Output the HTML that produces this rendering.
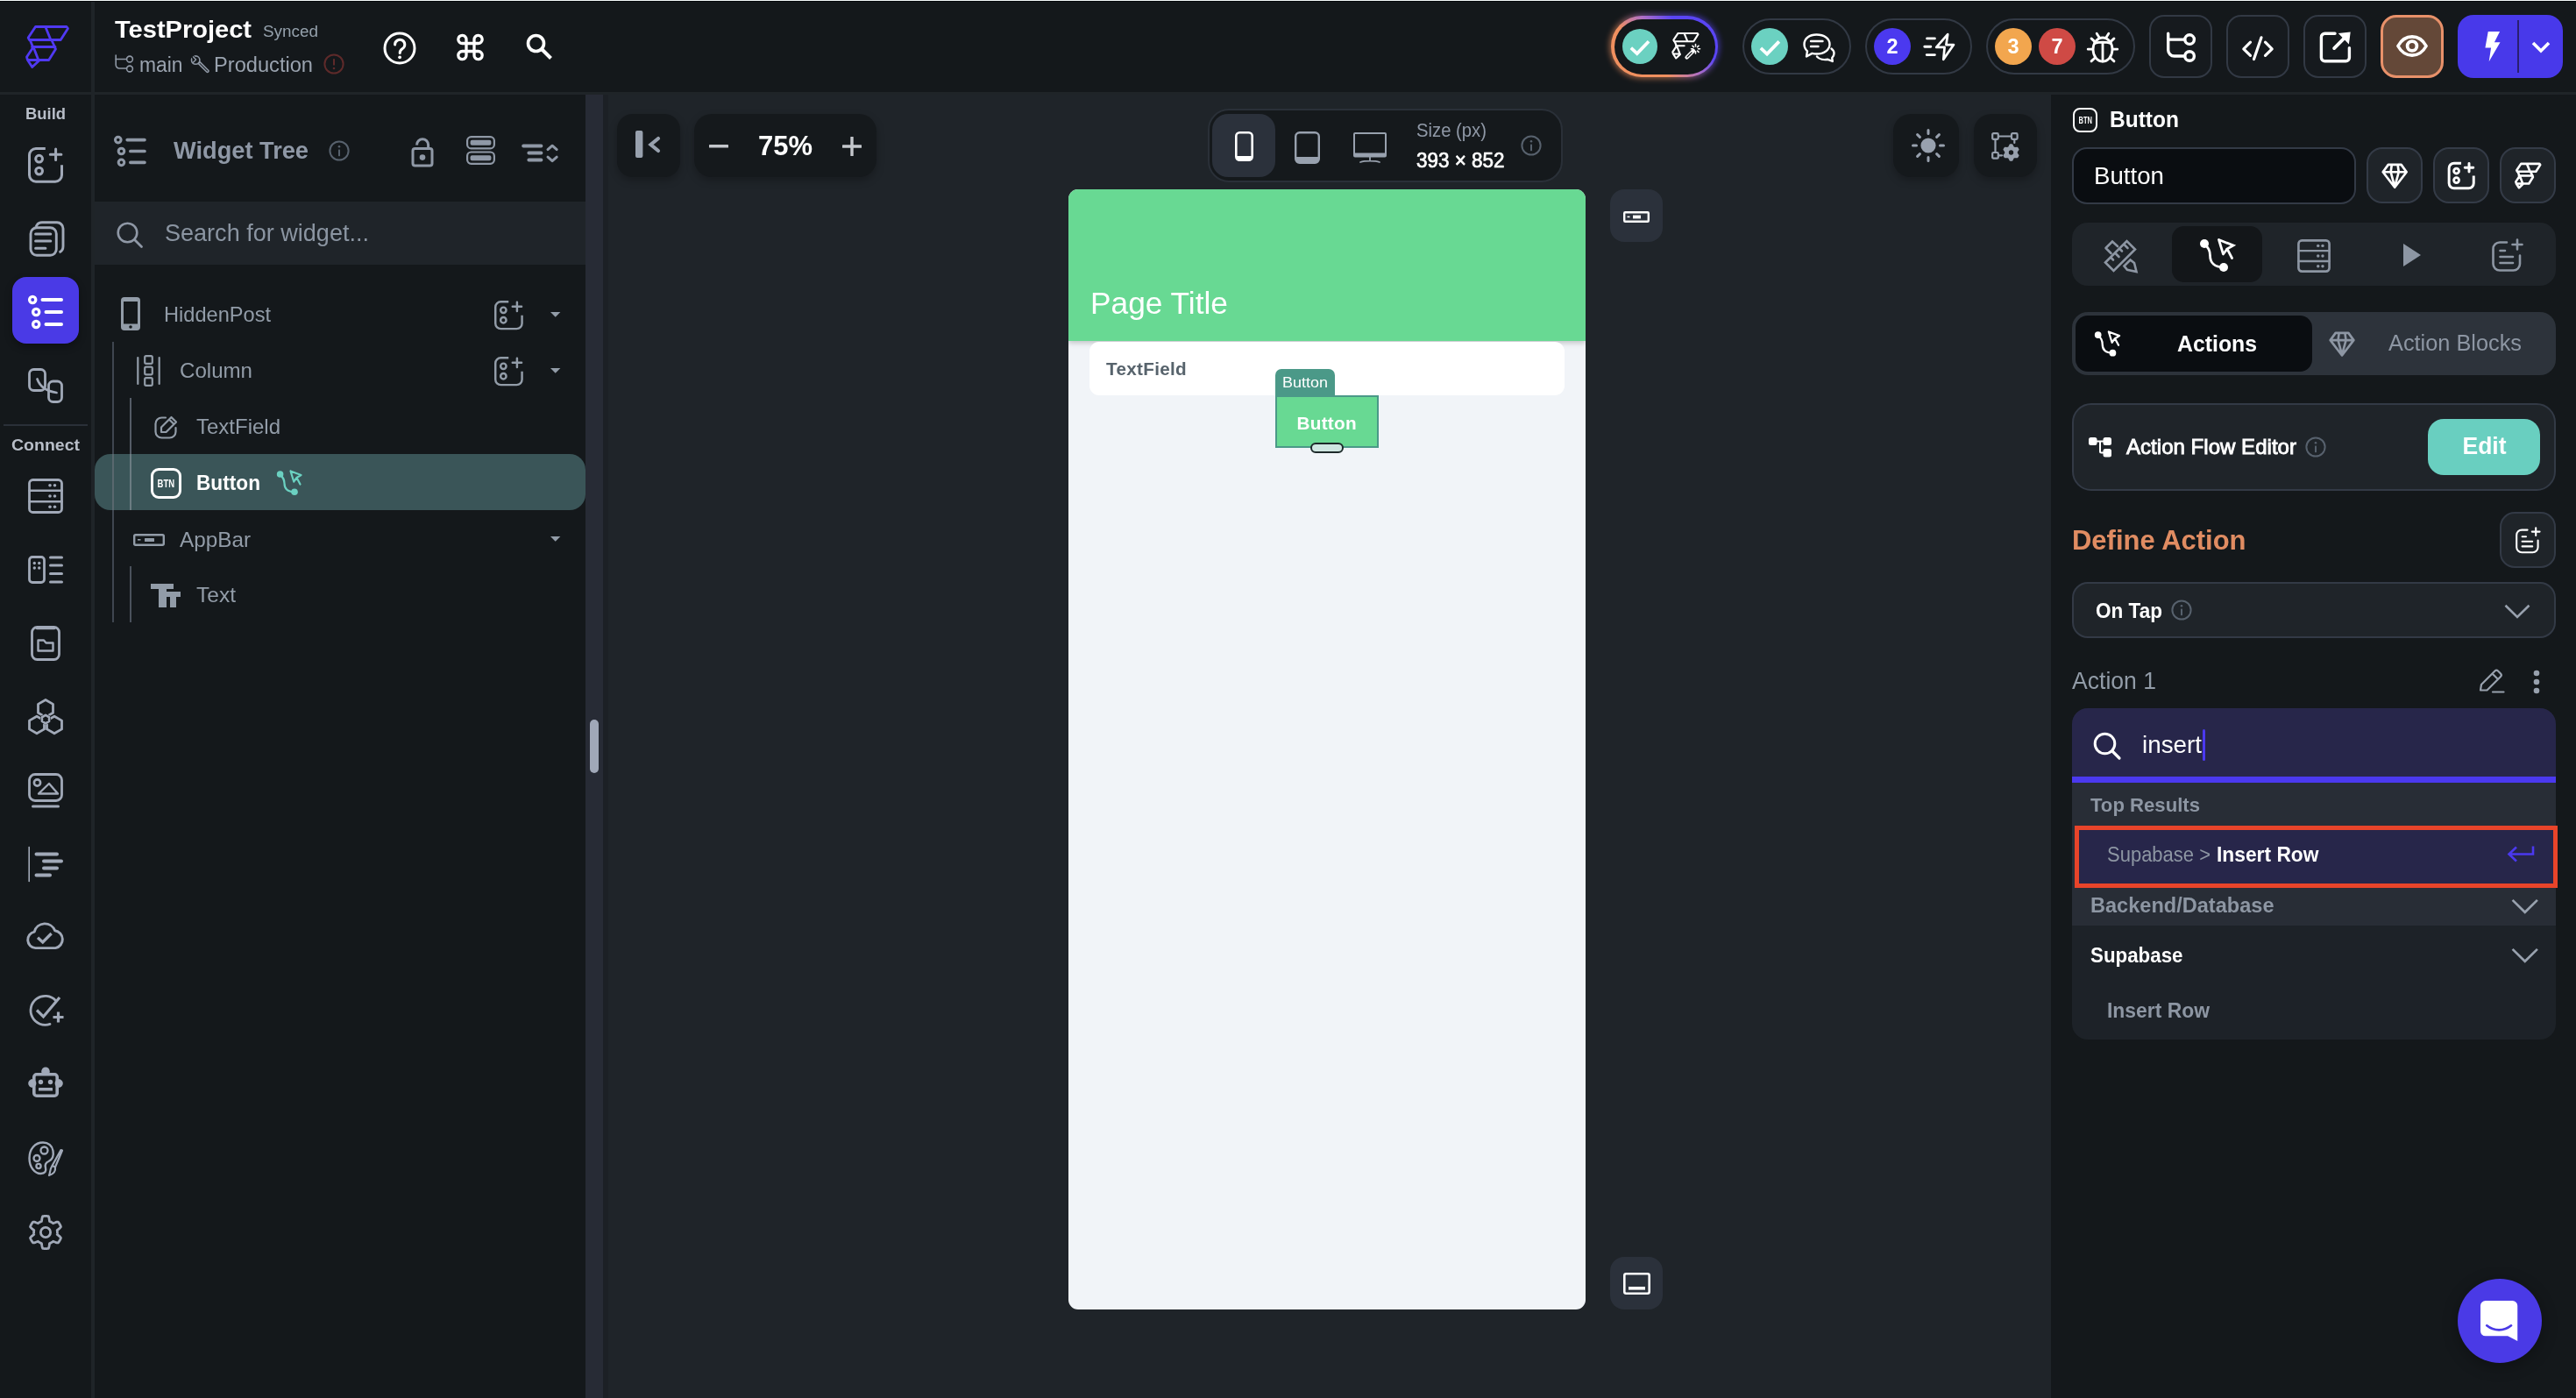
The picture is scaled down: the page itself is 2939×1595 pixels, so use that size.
<!DOCTYPE html><html><head><meta charset="utf-8"><title>FlutterFlow</title><style>html,body{margin:0;padding:0;background:#14181b;}body{width:2939px;height:1595px;position:relative;overflow:hidden;font-family:"Liberation Sans", sans-serif;}.a{position:absolute;display:block;}.t{white-space:nowrap;opacity:.999;}svg{overflow:visible}</style></head><body>
<div class="a" style="left:0px;top:0px;width:2939px;height:1595px;background:#14181b;"></div>
<div class="a" style="left:688px;top:107px;width:1652px;height:1488px;background:#1f2429;"></div>
<div class="a" style="left:0px;top:0px;width:2939px;height:1px;background:#f4f9f9;"></div>
<div class="a" style="left:0px;top:1px;width:2939px;height:1px;background:#06080b;"></div>
<div class="a" style="left:104px;top:2px;width:4px;height:1593px;background:#1f2428;"></div>
<div class="a" style="left:0px;top:105px;width:2939px;height:3px;background:#1f2428;"></div>
<div class="a" style="left:668px;top:108px;width:20px;height:1487px;background:#272b35;"></div>
<div class="a" style="left:688px;top:108px;width:6px;height:1487px;background:#1c2025;"></div>
<div class="a" style="left:673px;top:821px;width:10px;height:61px;background:#a0a8b8;border-radius:5px;"></div>
<svg class="a" style="left:30.00px;top:29.00px" width="49.00" height="49.00" viewBox="0 0 49 49"><path d="M10.5 1.5 H46 L47.5 3.5 L39.2 16.5 H3.5 L2.2 14 Z M22 2 L27.7 16 M4.2 16.5 L7.5 24.5 M29 17 L32.5 24.5 M6.5 24.5 H33 M32.5 25 L33.5 27 L25.7 39.5 H1.5 L0.5 36 L7.5 25.5 M9 27 L13.5 38.5 M1.5 39.5 L6.7 47.5 L14.5 40.2" fill="none" stroke="#5039f2" stroke-width="2.8" stroke-linecap="round" stroke-linejoin="round" /></svg>
<div class="a t" id="proj" style="top:15.6px;height:36px;line-height:36px;font-size:27.5px;font-weight:700;color:#fff;left:131px;transform-origin:0 50%;transform:scaleX(1.0559);">TestProject</div>
<div class="a t" id="synced" style="top:24.5px;height:23px;line-height:23px;font-size:18px;font-weight:400;color:#95a1ac;left:300px;transform-origin:0 50%;transform:scaleX(1.0492);">Synced</div>
<svg class="a" style="left:131.00px;top:62.00px" width="22.00" height="22.00" viewBox="0 0 22 22"><path d="M1.2 1 V12 a4 4 0 0 0 4 4 H13" fill="none" stroke="#8e97a4" stroke-width="1.6" stroke-linecap="round" stroke-linejoin="round" /><path d="M1.2 5.5 H13" fill="none" stroke="#8e97a4" stroke-width="1.6" stroke-linecap="round" stroke-linejoin="round" /><circle cx="17" cy="5.5" r="3.4" fill="none" stroke="#8e97a4" stroke-width="1.6"/><circle cx="17" cy="16.5" r="3.4" fill="none" stroke="#8e97a4" stroke-width="1.6"/></svg>
<div class="a t" id="main" style="top:58.5px;height:31px;line-height:31px;font-size:23.5px;font-weight:400;color:#9aa3af;left:158.5px;transform-origin:0 50%;transform:scaleX(0.9718);">main</div>
<svg class="a" style="left:216.50px;top:62.00px" width="22.00" height="22.00" viewBox="0 0 22 22"><circle cx="6.2" cy="6.6" r="4.7" fill="none" stroke="#8e97a4" stroke-width="1.6"/><path d="M6.2 6.6 L1.5 1" stroke="#14181b" stroke-width="3.6"/><path d="M3.6 2.9 L6.6 6 L3.2 9.6" fill="none" stroke="#8e97a4" stroke-width="1.5" stroke-linecap="round" stroke-linejoin="round" /><path d="M9.2 10.4 L11 8.6 L20.6 18.2 a1.2 1.2 0 0 1 0 1.8 a1.2 1.2 0 0 1 -1.8 0 Z" fill="none" stroke="#8e97a4" stroke-width="1.6" stroke-linecap="round" stroke-linejoin="round" /></svg>
<div class="a t" id="prod" style="top:58.5px;height:31px;line-height:31px;font-size:23.5px;font-weight:400;color:#9aa3af;left:243.5px;transform-origin:0 50%;transform:scaleX(1.0057);">Production</div>
<svg class="a" style="left:369.00px;top:61.00px" width="24.00" height="24.00" viewBox="0 0 24 24"><circle cx="12" cy="12" r="10.6" fill="none" stroke="#5e2a2a" stroke-width="2"/><rect x="11" y="6" width="2" height="7.5" rx="0.5" fill="#5e2a2a"/><circle cx="12" cy="17" r="1.3" fill="#5e2a2a"/></svg>
<svg class="a" style="left:437.00px;top:35.50px" width="38.00" height="38.00" viewBox="0 0 38 38"><circle cx="19" cy="19" r="17" fill="none" stroke="#fff" stroke-width="3"/><path d="M13.6 15 a5.6 5.6 0 1 1 8.6 4.6 c-2.3 1.5 -3 2.6 -3 4.8" fill="none" stroke="#fff" stroke-width="3" stroke-linecap="round" stroke-linejoin="round" /><circle cx="19.1" cy="29.3" r="1.9" fill="#fff"/></svg>
<svg class="a" style="left:520.50px;top:38.50px" width="31.00" height="30.00" viewBox="0 0 31 30"><path d="M11 10.5 V6.2 A4.6 4.6 0 1 0 6.4 10.5 H24.6 A4.6 4.6 0 1 0 20 6.2 V23.8 A4.6 4.6 0 1 0 24.6 19.5 H6.4 A4.6 4.6 0 1 0 11 23.8 Z" fill="none" stroke="#fff" stroke-width="3.3" stroke-linecap="round" stroke-linejoin="round" /></svg>
<svg class="a" style="left:599.50px;top:37.50px" width="31.00" height="31.00" viewBox="0 0 31 31"><circle cx="11.5" cy="11.5" r="9" fill="none" stroke="#fff" stroke-width="3.6"/><path d="M18.5 18.5 L28.5 28.5" fill="none" stroke="#fff" stroke-width="4" stroke-linecap="round" stroke-linejoin="round" style="stroke-linecap:butt"/></svg>
<div class="a" style="left:1836px;top:16px;width:126px;height:74px;border-radius:37px;background:linear-gradient(45deg,#f0905f 0%,#f0905f 34%,#b070c4 54%,#5a45f5 72%,#5a45f5 100%);filter:blur(3px);opacity:.55"></div>
<div class="a" style="left:1838px;top:18px;width:122px;height:70px;border-radius:35px;background:linear-gradient(45deg,#f0905f 0%,#f0905f 34%,#b070c4 54%,#5a45f5 72%,#5a45f5 100%);"></div>
<div class="a" style="left:1841.5px;top:21.5px;width:115px;height:63px;background:#14181b;border-radius:32px;"></div>
<div class="a" style="left:1851px;top:33px;width:40px;height:40px;background:#6bd1c1;border-radius:20px;"></div>
<svg class="a" style="left:1859.04px;top:44.80px" width="23.92" height="18.40" viewBox="0 0 26 20"><path d="M2 10.5 L9.5 17.5 L24 2.5" fill="none" stroke="#fff" stroke-width="4" stroke-linecap="round" stroke-linejoin="round" style="stroke-linecap:butt;stroke-linejoin:miter"/></svg>
<svg class="a" style="left:1907.50px;top:36.50px" width="32.00" height="32.00" viewBox="0 0 32 32"><g transform="scale(0.62)"><path d="M10.5 1.5 H46 L47.5 3.5 L39.2 16.5 H3.5 L2.2 14 Z M22 2 L27.7 16 M4.2 16.5 L7.5 24.5 M6.5 24.5 H22 M7.5 25.5 L0.5 36 L1.5 39.5 H14 M9 27 L13.5 38.5 M1.5 39.5 L6.7 47.5 L14.5 40.2" fill="none" stroke="#fff" stroke-width="3.4" stroke-linecap="round" stroke-linejoin="round" /></g><path d="M16.5 28.5 L24 21" fill="none" stroke="#fff" stroke-width="4.2" stroke-linecap="round" stroke-linejoin="round" /><path d="M17 28 L22 23" stroke="#14181b" stroke-width="1.2" stroke-linecap="round"/><path d="M26.5 13.5 V16 M26.5 21.5 V24 M21.5 18.8 H23.5 M29.5 18.8 H31.5 M23 15.2 L24.4 16.6 M28.6 21 L30 22.4 M30 15.2 L28.6 16.6" fill="none" stroke="#fff" stroke-width="1.6" stroke-linecap="round" stroke-linejoin="round" /></svg>
<div class="a" style="left:1988px;top:21px;width:124px;height:64px;border-radius:32px;border:2px solid #323944;box-sizing:border-box;"></div>
<div class="a" style="left:1998px;top:32px;width:42px;height:42px;background:#6bd1c1;border-radius:21px;"></div>
<svg class="a" style="left:2006.65px;top:44.50px" width="24.70" height="19.00" viewBox="0 0 26 20"><path d="M2 10.5 L9.5 17.5 L24 2.5" fill="none" stroke="#fff" stroke-width="4" stroke-linecap="round" stroke-linejoin="round" style="stroke-linecap:butt;stroke-linejoin:miter"/></svg>
<svg class="a" style="left:2056.50px;top:38.00px" width="37.00" height="33.00" viewBox="0 0 37 33"><path d="M15.5 1.5 C24 1.5 30.5 6 30.5 12.5 C30.5 19 24 23.5 15.5 23.5 C13.8 23.5 12 23.3 10.5 22.9 L4 26.5 L5 20.3 C2.7 18.3 1.5 15.5 1.5 12.5 C1.5 6 7.5 1.5 15.5 1.5 Z" fill="none" stroke="#fff" stroke-width="2.4" stroke-linecap="round" stroke-linejoin="round" /><path d="M9 9 H22.5 M9 15 H17.5" fill="none" stroke="#fff" stroke-width="2.4" stroke-linecap="round" stroke-linejoin="round" /><path d="M32.5 17.5 C34.5 19 35.5 21.2 35.5 23 C35.5 25 34.6 26.6 33.2 28 L33.8 32 L28.5 29.8 C24 30.6 18.5 29.6 16 26.5" fill="none" stroke="#fff" stroke-width="2.4" stroke-linecap="round" stroke-linejoin="round" /></svg>
<div class="a" style="left:2128px;top:21px;width:122px;height:64px;border-radius:32px;border:2px solid #323944;box-sizing:border-box;"></div>
<div class="a" style="left:2138px;top:32px;width:42px;height:42px;background:#4b39ef;border-radius:21px;"></div>
<div class="a t" style="top:37.5px;height:31px;line-height:31px;font-size:23.5px;font-weight:700;color:#fff;left:2159px;transform-origin:50% 50%;margin-left:-500px;width:1000px;text-align:center;"><span id="n2" style="display:inline-block;transform:scaleX(1.0000)">2</span></div>
<svg class="a" style="left:2193.50px;top:36.60px" width="37.00" height="33.00" viewBox="0 0 37 33"><path d="M4.6 6.9 H13.4 M1.8 16.3 H8.8 M4.2 25.6 H13.4" fill="none" stroke="#fff" stroke-width="2.9" stroke-linecap="round" stroke-linejoin="round" /><path d="M28.2 2.2 L15.2 16.9 H24.6 L23.3 30.8 L35 14.1 H26.4 Z" fill="none" stroke="#fff" stroke-width="2.7" stroke-linecap="round" stroke-linejoin="round" /></svg>
<div class="a" style="left:2266px;top:21px;width:170px;height:64px;border-radius:32px;border:2px solid #323944;box-sizing:border-box;"></div>
<div class="a" style="left:2276px;top:32px;width:42px;height:42px;background:#f2a64e;border-radius:21px;"></div>
<div class="a t" style="top:37.5px;height:31px;line-height:31px;font-size:23.5px;font-weight:700;color:#fff;left:2297px;transform-origin:50% 50%;margin-left:-500px;width:1000px;text-align:center;"><span id="n3" style="display:inline-block;transform:scaleX(1.0000)">3</span></div>
<div class="a" style="left:2326px;top:32px;width:42px;height:42px;background:#cf4a45;border-radius:21px;"></div>
<div class="a t" style="top:37.5px;height:31px;line-height:31px;font-size:23.5px;font-weight:700;color:#fff;left:2347px;transform-origin:50% 50%;margin-left:-500px;width:1000px;text-align:center;"><span id="n7" style="display:inline-block;transform:scaleX(1.0000)">7</span></div>
<svg class="a" style="left:2381.00px;top:36.70px" width="36.00" height="35.00" viewBox="0 0 36 35"><ellipse cx="18" cy="19.6" rx="11" ry="13.6" fill="none" stroke="#fff" stroke-width="2.8"/><path d="M8.6 12.4 Q18 9.8 27.4 12.4 M18 11.6 V33 M1.2 19.2 H6.8 M29.2 19.2 H34.8 M5 6.9 L9 10.6 M31 6.9 L27 10.6 M5 32.9 L9.2 29 M31 32.9 L26.8 29 M11.2 1.2 L14.2 6 M24.8 1.2 L21.8 6" fill="none" stroke="#fff" stroke-width="2.8" stroke-linecap="round" stroke-linejoin="round" /></svg>
<div class="a" style="left:2452px;top:17px;width:72px;height:72px;background:#161a1e;border-radius:17px;border:2px solid #323944;box-sizing:border-box;"></div>
<svg class="a" style="left:2470.50px;top:35.00px" width="35.00" height="37.00" viewBox="0 0 35 37"><path d="M2.7 3.2 V22 a7 7 0 0 0 7 7 H21.5" fill="none" stroke="#fff" stroke-width="3.4" stroke-linecap="round" stroke-linejoin="round" /><path d="M2.7 10.1 H21.5" fill="none" stroke="#fff" stroke-width="3.4" stroke-linecap="round" stroke-linejoin="round" /><circle cx="27.1" cy="10.1" r="5.3" fill="none" stroke="#fff" stroke-width="3.4"/><circle cx="27.1" cy="29" r="5.3" fill="none" stroke="#fff" stroke-width="3.4"/></svg>
<div class="a" style="left:2540px;top:17px;width:72px;height:72px;background:#161a1e;border-radius:17px;border:2px solid #323944;box-sizing:border-box;"></div>
<svg class="a" style="left:2558.00px;top:40.50px" width="36.00" height="28.00" viewBox="0 0 36 28"><path d="M9.5 7.2 L1.8 14.8 L9.5 22.4 M26.5 7.2 L34.2 14.8 L26.5 22.4 M22 1.8 L13.5 26.5" fill="none" stroke="#fff" stroke-width="3.2" stroke-linecap="round" stroke-linejoin="round" /></svg>
<div class="a" style="left:2628px;top:17px;width:72px;height:72px;background:#161a1e;border-radius:17px;border:2px solid #323944;box-sizing:border-box;"></div>
<svg class="a" style="left:2645.50px;top:36.40px" width="37.00" height="36.00" viewBox="0 0 37 36"><path d="M18 2.3 H6.4 a4 4 0 0 0 -4 4 V29.8 a4 4 0 0 0 4 4 H30.4 a4 4 0 0 0 4 -4 V18.6" fill="none" stroke="#fff" stroke-width="3.4" stroke-linecap="round" stroke-linejoin="round" /><path d="M17.1 19.1 L30 6.2" fill="none" stroke="#fff" stroke-width="3.8" stroke-linecap="round" stroke-linejoin="round" /><path d="M21.8 2 L35.7 0.5 L33.9 14.4 Z" fill="#fff" /></svg>
<div class="a" style="left:2716px;top:17px;width:72px;height:72px;background:#644838;border-radius:18px;border:3px solid #e8916a;box-sizing:border-box;"></div>
<svg class="a" style="left:2734.00px;top:39.50px" width="36.00" height="25.00" viewBox="0 0 36 25"><path d="M1.9 12.5 C6 5 12 1.9 18 1.9 C24 1.9 30 5 34.1 12.5 C30 20 24 23.1 18 23.1 C12 23.1 6 20 1.9 12.5 Z" fill="none" stroke="#fff" stroke-width="3.6" stroke-linecap="round" stroke-linejoin="round" /><circle cx="18" cy="12.5" r="5.4" fill="none" stroke="#fff" stroke-width="3.8"/></svg>
<div class="a" style="left:2804px;top:17px;width:120px;height:72px;background:#4839ea;border-radius:18px;"></div>
<div class="a" style="left:2872px;top:23px;width:2px;height:60px;background:#2a2070;"></div>
<svg class="a" style="left:2834.00px;top:35.90px" width="19.00" height="34.20" viewBox="0 0 20 36"><path d="M5 0 H19 L12.5 13 H19.5 L6 36 L8.5 19.5 H1.5 Z" fill="#fff" /></svg>
<svg class="a" style="left:2888.00px;top:47.00px" width="22.00" height="13.00" viewBox="0 0 22 13"><path d="M2 2 L11 11 L20 2" fill="none" stroke="#fff" stroke-width="3.6" stroke-linecap="round" stroke-linejoin="round" style="stroke-linecap:butt;stroke-linejoin:miter"/></svg>
<div class="a t" id="build" style="top:116.5px;height:25px;line-height:25px;font-size:19px;font-weight:700;color:#b8bec8;left:29px;transform-origin:0 50%;transform:scaleX(0.9684);">Build</div>
<svg class="a" style="left:32.00px;top:167.60px" width="40.00" height="41.00" viewBox="0 0 40 41"><path d="M19.8 1.6 H9 a7.5 7.5 0 0 0 -7.5 7.5 V31.7 a7.5 7.5 0 0 0 7.5 7.5 H31 a7.5 7.5 0 0 0 7.5 -7.5 V20.3" fill="none" stroke="#a1a9b8" stroke-width="3" stroke-linecap="round" stroke-linejoin="round" style="stroke-linecap:butt"/><path d="M31.6 2 V14.6 M25.3 8.3 H37.9" fill="none" stroke="#a1a9b8" stroke-width="3" stroke-linecap="round" stroke-linejoin="round" /><circle cx="12.6" cy="13.2" r="3.9" fill="none" stroke="#a1a9b8" stroke-width="3"/><circle cx="12.6" cy="27.1" r="3.9" fill="none" stroke="#a1a9b8" stroke-width="3"/></svg>
<svg class="a" style="left:32.50px;top:250.50px" width="41.00" height="42.00" viewBox="0 0 41 42"><rect x="2" y="8.7" width="29.3" height="31.6" rx="7" fill="none" stroke="#a1a9b8" stroke-width="2.9"/><path d="M8 8 C9 5 11.5 2.8 15 2.8 H32 a7 7 0 0 1 7 7 V30 C39 33.5 37.5 35.8 34.5 36.8" fill="none" stroke="#a1a9b8" stroke-width="2.9" stroke-linecap="round" stroke-linejoin="round" style="stroke-linecap:butt"/><path d="M7.6 15.9 H24.8 M7.6 24 H24.8 M7.6 32.2 H18.9" fill="none" stroke="#a1a9b8" stroke-width="3" stroke-linecap="round" stroke-linejoin="round" /></svg>
<div class="a" style="left:14px;top:316px;width:76px;height:76px;background:#4a3ae6;border-radius:16px;box-shadow:0 4px 8px rgba(0,0,0,.3);"></div>
<svg class="a" style="left:31.70px;top:337.00px" width="40.00" height="38.00" viewBox="0 0 40 38"><circle cx="5.2" cy="5" r="3.6" fill="none" stroke="#fff" stroke-width="3.3"/><circle cx="9.2" cy="19" r="3.6" fill="none" stroke="#fff" stroke-width="3.3"/><circle cx="9.2" cy="33" r="3.6" fill="none" stroke="#fff" stroke-width="3.3"/><path d="M16.5 5 H38 M20.5 19 H38 M20.5 33 H38" fill="none" stroke="#fff" stroke-width="4" stroke-linecap="round" stroke-linejoin="round" /></svg>
<svg class="a" style="left:32.00px;top:420.00px" width="40.00" height="40.00" viewBox="0 0 40 40"><rect x="1.5" y="1.5" width="18" height="24" rx="5" fill="none" stroke="#a1a9b8" stroke-width="2.8"/><rect x="23.5" y="15" width="15" height="23.5" rx="5" fill="none" stroke="#a1a9b8" stroke-width="2.8"/><path d="M10.5 12.5 C 13.5 21, 22 26.5, 32.5 28" fill="none" stroke="#a1a9b8" stroke-width="2.7" stroke-linecap="round" stroke-linejoin="round" /></svg>
<div class="a" style="left:4px;top:484px;width:96px;height:2px;background:#2a3038;"></div>
<div class="a t" id="connect" style="top:495.0px;height:25px;line-height:25px;font-size:19px;font-weight:700;color:#b8bec8;left:13px;transform-origin:0 50%;transform:scaleX(1.0263);">Connect</div>
<svg class="a" style="left:32.00px;top:546.00px" width="40.00" height="40.00" viewBox="0 0 40 40"><rect x="1.5" y="1.5" width="37" height="37" rx="4" fill="none" stroke="#a1a9b8" stroke-width="2.8"/><path d="M1.5 13.8 H38.5 M1.5 26.2 H38.5" fill="none" stroke="#a1a9b8" stroke-width="2.6" stroke-linecap="round" stroke-linejoin="round" /><circle cx="25" cy="7.8" r="1.8" fill="#a1a9b8"/><circle cx="30.5" cy="7.8" r="1.8" fill="#a1a9b8"/><circle cx="25" cy="20" r="1.8" fill="#a1a9b8"/><circle cx="30.5" cy="20" r="1.8" fill="#a1a9b8"/><circle cx="25" cy="32.3" r="1.8" fill="#a1a9b8"/><circle cx="30.5" cy="32.3" r="1.8" fill="#a1a9b8"/></svg>
<svg class="a" style="left:32.00px;top:633.70px" width="40.00" height="32.00" viewBox="0 0 40 32"><rect x="1.5" y="1.5" width="17" height="29" rx="3.5" fill="none" stroke="#a1a9b8" stroke-width="2.8"/><circle cx="7.3" cy="8.5" r="1.7" fill="#a1a9b8"/><circle cx="12.7" cy="8.5" r="1.7" fill="#a1a9b8"/><circle cx="7.3" cy="14" r="1.7" fill="#a1a9b8"/><circle cx="12.7" cy="14" r="1.7" fill="#a1a9b8"/><path d="M25.5 2 H38.5 M25.5 11 H38.5 M25.5 20.5 H38.5 M25.5 30 H38.5" fill="none" stroke="#a1a9b8" stroke-width="3" stroke-linecap="round" stroke-linejoin="round" /></svg>
<svg class="a" style="left:35.00px;top:713.80px" width="34.00" height="40.00" viewBox="0 0 34 40"><rect x="1.5" y="1.5" width="31" height="37" rx="6" fill="none" stroke="#a1a9b8" stroke-width="2.8"/><path d="M7 2.5 H27" fill="none" stroke="#a1a9b8" stroke-width="3.5" stroke-linecap="round" stroke-linejoin="round" /><path d="M8.5 16.5 H15 L17.5 19.5 H25.5 V28.5 H8.5 Z" fill="none" stroke="#a1a9b8" stroke-width="2.4" stroke-linecap="round" stroke-linejoin="round" /></svg>
<svg class="a" style="left:31.00px;top:797.00px" width="42.00" height="42.00" viewBox="0 0 42 42"><path d="M29.49 16.20 L21.00 21.10 L12.51 16.20 L12.51 6.40 L21.00 1.50 L29.49 6.40 Z" fill="none" stroke="#a1a9b8" stroke-width="2.8" stroke-linecap="round" stroke-linejoin="round" /><path d="M19.49 34.90 L11.00 39.80 L2.51 34.90 L2.51 25.10 L11.00 20.20 L19.49 25.10 Z" fill="none" stroke="#a1a9b8" stroke-width="2.8" stroke-linecap="round" stroke-linejoin="round" /><path d="M39.49 34.90 L31.00 39.80 L22.51 34.90 L22.51 25.10 L31.00 20.20 L39.49 25.10 Z" fill="none" stroke="#a1a9b8" stroke-width="2.8" stroke-linecap="round" stroke-linejoin="round" /><circle cx="21" cy="23.6" r="6" fill="#14181b"/><path d="M25.07 25.95 L21.00 28.30 L16.93 25.95 L16.93 21.25 L21.00 18.90 L25.07 21.25 Z" fill="none" stroke="#a1a9b8" stroke-width="2.6" stroke-linecap="round" stroke-linejoin="round" /></svg>
<svg class="a" style="left:32.00px;top:882.00px" width="40.00" height="40.00" viewBox="0 0 40 40"><rect x="1.5" y="1.5" width="37" height="30" rx="6.5" fill="none" stroke="#a1a9b8" stroke-width="2.8"/><circle cx="10.5" cy="11" r="3.6" fill="none" stroke="#a1a9b8" stroke-width="2.6"/><path d="M12 23.5 L24 12 L34 23.5 Z" fill="none" stroke="#a1a9b8" stroke-width="2.4" stroke-linecap="round" stroke-linejoin="round" /><path d="M5.5 38 H34.5" fill="none" stroke="#a1a9b8" stroke-width="3" stroke-linecap="round" stroke-linejoin="round" /></svg>
<svg class="a" style="left:31.50px;top:966.00px" width="40.00" height="40.00" viewBox="0 0 40 40"><path d="M1.2 0.5 V39.5" fill="none" stroke="#a1a9b8" stroke-width="1.6" stroke-linecap="round" stroke-linejoin="round" /><path d="M9.5 8.5 H33 M18 16.5 H38 M18 24.5 H33 M9.5 32.5 H25" fill="none" stroke="#a1a9b8" stroke-width="4" stroke-linecap="round" stroke-linejoin="round" /></svg>
<svg class="a" style="left:29.12px;top:1052.40px" width="45.76" height="31.20" viewBox="0 0 44 30"><path d="M11 28.5 A9 9 0 0 1 9.8 10.7 A11.9 11.9 0 0 1 32.4 9.4 A9.7 9.7 0 0 1 33 28.5 Z" fill="none" stroke="#a1a9b8" stroke-width="2.8" stroke-linecap="round" stroke-linejoin="round" /><path d="M13.5 17 l5.5 5 l9.5 -9.5" fill="none" stroke="#a1a9b8" stroke-width="3.2" stroke-linecap="round" stroke-linejoin="round" style="stroke-linecap:butt;stroke-linejoin:miter"/></svg>
<svg class="a" style="left:33.00px;top:1132.50px" width="42.00" height="38.00" viewBox="0 0 42 38"><path d="M30.5 8.5 A16.5 16.5 0 1 0 24 35.4" fill="none" stroke="#a1a9b8" stroke-width="2.8" stroke-linecap="round" stroke-linejoin="round" /><path d="M9 19.5 l7.5 7.5 L35 5" fill="none" stroke="#a1a9b8" stroke-width="3.2" stroke-linecap="round" stroke-linejoin="round" style="stroke-linecap:butt;stroke-linejoin:miter"/><path d="M33.5 21.5 V33.5 M27.5 27.5 H39.5" fill="none" stroke="#a1a9b8" stroke-width="3.2" stroke-linecap="round" stroke-linejoin="round" style="stroke-linecap:butt"/></svg>
<svg class="a" style="left:32.00px;top:1217.00px" width="40.00" height="36.00" viewBox="0 0 40 36"><rect x="6.8" y="8.8" width="26.4" height="24.4" rx="3" fill="none" stroke="#a1a9b8" stroke-width="3.6"/><circle cx="20" cy="5" r="4.6" fill="#a1a9b8"/><rect x="15.5" y="4.5" width="9" height="5" rx="0" fill="#a1a9b8"/><circle cx="4.8" cy="19" r="4.6" fill="#a1a9b8"/><circle cx="35.2" cy="19" r="4.6" fill="#a1a9b8"/><rect x="3" y="14.5" width="4" height="9" rx="0" fill="#a1a9b8"/><rect x="33" y="14.5" width="4" height="9" rx="0" fill="#a1a9b8"/><circle cx="14.5" cy="17.5" r="2.7" fill="#a1a9b8"/><circle cx="25.5" cy="17.5" r="2.7" fill="#a1a9b8"/><rect x="12" y="24" width="16" height="3.6" rx="0.5" fill="#a1a9b8"/></svg>
<svg class="a" style="left:32.00px;top:1301.80px" width="40.00" height="40.00" viewBox="0 0 40 40"><path d="M17 1.5 C8 1.5 1.5 9 1.5 19.5 C1.5 29.5 7.5 37 14.5 37 C19.5 37 21 34 20 30.5 C19 27 20 24.5 23.5 23 C27.5 21 29.5 16.5 28.5 11 C27.5 5 23 1.5 17 1.5 Z" fill="none" stroke="#a1a9b8" stroke-width="2.4" stroke-linecap="round" stroke-linejoin="round" /><circle cx="18.5" cy="10.5" r="4" fill="none" stroke="#a1a9b8" stroke-width="2.3"/><circle cx="10" cy="19.5" r="3.5" fill="none" stroke="#a1a9b8" stroke-width="2.3"/><circle cx="12" cy="28.5" r="2.6" fill="none" stroke="#a1a9b8" stroke-width="2.3"/><path d="M39 10.5 L31 29.5 L27.5 28 L37.5 10 Z" fill="none" stroke="#a1a9b8" stroke-width="2.2" stroke-linecap="round" stroke-linejoin="round" /><path d="M31 30 C31.5 34 29 37.5 24 39 C25.5 36 24.5 33 27 29" fill="none" stroke="#a1a9b8" stroke-width="2.2" stroke-linecap="round" stroke-linejoin="round" /></svg>
<svg class="a" style="left:32.30px;top:1385.80px" width="40.00" height="40.00" viewBox="0 0 40 40"><path d="M20.00 1.40 L20.81 1.42 L21.62 1.47 L22.43 1.56 L23.23 1.68 L23.78 2.93 L24.14 4.55 L24.37 6.15 L24.58 7.41 L25.13 7.62 L25.66 7.86 L26.19 8.11 L26.70 8.40 L27.20 8.70 L27.69 9.02 L28.16 9.37 L28.61 9.74 L29.81 9.30 L31.31 8.69 L32.89 8.19 L34.25 8.04 L34.76 8.68 L35.24 9.33 L35.69 10.01 L36.11 10.70 L36.50 11.41 L36.86 12.14 L37.18 12.88 L37.48 13.64 L36.67 14.74 L35.45 15.86 L34.18 16.86 L33.20 17.67 L33.29 18.25 L33.35 18.83 L33.39 19.42 L33.40 20.00 L33.39 20.58 L33.35 21.17 L33.29 21.75 L33.20 22.33 L34.18 23.14 L35.45 24.14 L36.67 25.26 L37.48 26.36 L37.18 27.12 L36.86 27.86 L36.50 28.59 L36.11 29.30 L35.69 29.99 L35.24 30.67 L34.76 31.32 L34.25 31.96 L32.89 31.81 L31.31 31.31 L29.81 30.70 L28.61 30.26 L28.16 30.63 L27.69 30.98 L27.20 31.30 L26.70 31.60 L26.19 31.89 L25.66 32.14 L25.13 32.38 L24.58 32.59 L24.37 33.85 L24.14 35.45 L23.78 37.07 L23.23 38.32 L22.43 38.44 L21.62 38.53 L20.81 38.58 L20.00 38.60 L19.19 38.58 L18.38 38.53 L17.57 38.44 L16.77 38.32 L16.22 37.07 L15.86 35.45 L15.63 33.85 L15.42 32.59 L14.87 32.38 L14.34 32.14 L13.81 31.89 L13.30 31.60 L12.80 31.30 L12.31 30.98 L11.84 30.63 L11.39 30.26 L10.19 30.70 L8.69 31.31 L7.11 31.81 L5.75 31.96 L5.24 31.32 L4.76 30.67 L4.31 29.99 L3.89 29.30 L3.50 28.59 L3.14 27.86 L2.82 27.12 L2.52 26.36 L3.33 25.26 L4.55 24.14 L5.82 23.14 L6.80 22.33 L6.71 21.75 L6.65 21.17 L6.61 20.58 L6.60 20.00 L6.61 19.42 L6.65 18.83 L6.71 18.25 L6.80 17.67 L5.82 16.86 L4.55 15.86 L3.33 14.74 L2.52 13.64 L2.82 12.88 L3.14 12.14 L3.50 11.41 L3.89 10.70 L4.31 10.01 L4.76 9.33 L5.24 8.68 L5.75 8.04 L7.11 8.19 L8.69 8.69 L10.19 9.30 L11.39 9.74 L11.84 9.37 L12.31 9.02 L12.80 8.70 L13.30 8.40 L13.81 8.11 L14.34 7.86 L14.87 7.62 L15.42 7.41 L15.63 6.15 L15.86 4.55 L16.22 2.93 L16.77 1.68 L17.57 1.56 L18.38 1.47 L19.19 1.42 Z" fill="none" stroke="#a1a9b8" stroke-width="2.8" stroke-linecap="round" stroke-linejoin="round" /><circle cx="20" cy="20" r="5.6" fill="none" stroke="#a1a9b8" stroke-width="2.8"/></svg>
<svg class="a" style="left:129.60px;top:154.52px" width="36.80" height="34.96" viewBox="0 0 40 38"><circle cx="5.2" cy="5" r="3.6" fill="none" stroke="#8f98a6" stroke-width="3.3"/><circle cx="9.2" cy="19" r="3.6" fill="none" stroke="#8f98a6" stroke-width="3.3"/><circle cx="9.2" cy="33" r="3.6" fill="none" stroke="#8f98a6" stroke-width="3.3"/><path d="M16.5 5 H38 M20.5 19 H38 M20.5 33 H38" fill="none" stroke="#8f98a6" stroke-width="4" stroke-linecap="round" stroke-linejoin="round" /></svg>
<div class="a t" id="wt" style="top:154.0px;height:36px;line-height:36px;font-size:27.5px;font-weight:700;color:#8f98a6;left:198px;transform-origin:0 50%;transform:scaleX(0.9896);">Widget Tree</div>
<svg class="a" style="left:374.50px;top:160.00px" width="24.00" height="24.00" viewBox="0 0 24 24"><circle cx="12" cy="12" r="10.6" fill="none" stroke="#57616d" stroke-width="2"/><rect x="11" y="10.6" width="2" height="7.6" rx="0.6" fill="#57616d"/><circle cx="12" cy="7.3" r="1.3" fill="#57616d"/></svg>
<svg class="a" style="left:468.50px;top:156.50px" width="26.00" height="34.00" viewBox="0 0 26 34"><rect x="2" y="12.6" width="22" height="19.4" rx="2.5" fill="none" stroke="#8f98a6" stroke-width="3"/><path d="M19.6 12 V8.2 a6.5 6.5 0 0 0 -13 0 V8.6" fill="none" stroke="#8f98a6" stroke-width="3" stroke-linecap="round" stroke-linejoin="round" style="stroke-linecap:butt"/><circle cx="13" cy="22.6" r="3.3" fill="#8f98a6"/></svg>
<svg class="a" style="left:532.00px;top:155.10px" width="33.00" height="33.00" viewBox="0 0 33 33"><rect x="1.1" y="1.1" width="30.8" height="13.3" rx="4.5" fill="none" stroke="#8f98a6" stroke-width="2.2"/><rect x="4.6" y="4.8" width="23.8" height="6" rx="2" fill="#8f98a6"/><rect x="1.1" y="18.5" width="30.8" height="13.3" rx="4.5" fill="none" stroke="#8f98a6" stroke-width="2.2"/><rect x="4.6" y="22.2" width="23.8" height="6" rx="2" fill="#8f98a6"/></svg>
<svg class="a" style="left:595.30px;top:164.30px" width="42.00" height="22.00" viewBox="0 0 42 22"><path d="M2.2 2.6 H22.4 M8.4 10.6 H22.4 M8.4 18.6 H22.4" fill="none" stroke="#8f98a6" stroke-width="4" stroke-linecap="round" stroke-linejoin="round" /><path d="M30 6.6 L35.1 2.2 L40.2 6.6 M30 15.2 L35.1 19.6 L40.2 15.2" fill="none" stroke="#8f98a6" stroke-width="3" stroke-linecap="round" stroke-linejoin="round" /></svg>
<div class="a" style="left:108px;top:230px;width:560px;height:72px;background:#1f2429;"></div>
<svg class="a" style="left:133.00px;top:252.50px" width="30.00" height="30.00" viewBox="0 0 30 30"><circle cx="12.5" cy="12.5" r="10.8" fill="none" stroke="#8f98a6" stroke-width="2.6"/><path d="M20.5 20.5 L28.5 28.5" fill="none" stroke="#8f98a6" stroke-width="2.8" stroke-linecap="round" stroke-linejoin="round" /></svg>
<div class="a t" id="sfw" style="top:248.0px;height:36px;line-height:36px;font-size:27.5px;font-weight:400;color:#8b95a2;left:188px;transform-origin:0 50%;transform:scaleX(0.9834);">Search for widget...</div>
<div class="a" style="left:128px;top:390px;width:2px;height:320px;background:#3f4650;"></div>
<div class="a" style="left:108px;top:518px;width:560px;height:64px;background:#3a5558;border-radius:18px;"></div>
<div class="a" style="left:128px;top:518px;width:2px;height:64px;background:#59686e;"></div>
<div class="a" style="left:148px;top:454px;width:2px;height:64px;background:#555c67;"></div>
<div class="a" style="left:148px;top:518px;width:2px;height:64px;background:#6b7c82;"></div>
<div class="a" style="left:148px;top:646px;width:2px;height:64px;background:#4a515c;"></div>
<svg class="a" style="left:138.00px;top:339.00px" width="22.00" height="38.00" viewBox="0 0 22 38"><rect x="0" y="0" width="22" height="38" rx="4" fill="#929ca8"/><rect x="3" y="5" width="16" height="25.5" fill="#14181b"/><circle cx="11" cy="34" r="1.8" fill="#14181b"/></svg>
<div class="a t" id="hp" style="top:343.0px;height:31px;line-height:31px;font-size:24px;font-weight:400;color:#929ca8;left:187px;transform-origin:0 50%;transform:scaleX(0.9833);">HiddenPost</div>
<svg class="a" style="left:563.60px;top:343.19px" width="32.80" height="33.62" viewBox="0 0 40 41"><path d="M19.8 1.6 H9 a7.5 7.5 0 0 0 -7.5 7.5 V31.7 a7.5 7.5 0 0 0 7.5 7.5 H31 a7.5 7.5 0 0 0 7.5 -7.5 V20.3" fill="none" stroke="#929ca8" stroke-width="3" stroke-linecap="round" stroke-linejoin="round" style="stroke-linecap:butt"/><path d="M31.6 2 V14.6 M25.3 8.3 H37.9" fill="none" stroke="#929ca8" stroke-width="3" stroke-linecap="round" stroke-linejoin="round" /><circle cx="12.6" cy="13.2" r="3.9" fill="none" stroke="#929ca8" stroke-width="3"/><circle cx="12.6" cy="27.1" r="3.9" fill="none" stroke="#929ca8" stroke-width="3"/></svg>
<svg class="a" style="left:628.30px;top:355.65px" width="11.40" height="5.70" viewBox="0 0 12 6"><path d="M0 0 H12 L6 6 Z" fill="#929ca8" /></svg>
<svg class="a" style="left:156.00px;top:405.00px" width="27.00" height="36.00" viewBox="0 0 27 36"><path d="M1.3 3 V33 M25.7 3 V33" fill="none" stroke="#929ca8" stroke-width="2.2" stroke-linecap="round" stroke-linejoin="round" /><rect x="9.2" y="1.2" width="8.6" height="8.6" rx="1.5" fill="none" stroke="#929ca8" stroke-width="2.2"/><rect x="9.2" y="13.7" width="8.6" height="8.6" rx="1.5" fill="none" stroke="#929ca8" stroke-width="2.2"/><rect x="9.2" y="26.2" width="8.6" height="8.6" rx="1.5" fill="none" stroke="#929ca8" stroke-width="2.2"/></svg>
<div class="a t" id="col" style="top:407.0px;height:31px;line-height:31px;font-size:24px;font-weight:400;color:#929ca8;left:205px;transform-origin:0 50%;transform:scaleX(1.0036);">Column</div>
<svg class="a" style="left:563.60px;top:407.19px" width="32.80" height="33.62" viewBox="0 0 40 41"><path d="M19.8 1.6 H9 a7.5 7.5 0 0 0 -7.5 7.5 V31.7 a7.5 7.5 0 0 0 7.5 7.5 H31 a7.5 7.5 0 0 0 7.5 -7.5 V20.3" fill="none" stroke="#929ca8" stroke-width="3" stroke-linecap="round" stroke-linejoin="round" style="stroke-linecap:butt"/><path d="M31.6 2 V14.6 M25.3 8.3 H37.9" fill="none" stroke="#929ca8" stroke-width="3" stroke-linecap="round" stroke-linejoin="round" /><circle cx="12.6" cy="13.2" r="3.9" fill="none" stroke="#929ca8" stroke-width="3"/><circle cx="12.6" cy="27.1" r="3.9" fill="none" stroke="#929ca8" stroke-width="3"/></svg>
<svg class="a" style="left:628.30px;top:419.65px" width="11.40" height="5.70" viewBox="0 0 12 6"><path d="M0 0 H12 L6 6 Z" fill="#929ca8" /></svg>
<svg class="a" style="left:175.50px;top:472.50px" width="28.00" height="28.00" viewBox="0 0 28 28"><path d="M13 3.5 H8.5 a7 7 0 0 0 -7 7 V19.5 a7 7 0 0 0 7 7 H17.5 a7 7 0 0 0 7 -7 V15" fill="none" stroke="#929ca8" stroke-width="2.2" stroke-linecap="round" stroke-linejoin="round" /><path d="M19.5 3 L25 8.5 L13.5 20 H8 V14.5 Z M17 5.5 L22.5 11" fill="none" stroke="#929ca8" stroke-width="2.2" stroke-linecap="round" stroke-linejoin="round" /></svg>
<div class="a t" id="tf" style="top:471.0px;height:31px;line-height:31px;font-size:24px;font-weight:400;color:#929ca8;left:224px;transform-origin:0 50%;transform:scaleX(0.9995);">TextField</div>
<div class="a" style="left:171.5px;top:534px;width:35px;height:35px;border-radius:9px;border:3px solid #fff;box-sizing:border-box;"></div>
<div class="a t" style="top:543.0px;height:17px;line-height:17px;font-size:13px;font-weight:700;color:#fff;left:189px;transform-origin:50% 50%;margin-left:-500px;width:1000px;text-align:center;"><span id="btn1" style="display:inline-block;transform:scaleX(0.7298)">BTN</span></div>
<div class="a t" id="bt" style="top:534.5px;height:32px;line-height:32px;font-size:24.5px;font-weight:700;color:#fff;left:224px;transform-origin:0 50%;transform:scaleX(0.9250);">Button</div>
<svg class="a" style="left:314.50px;top:536.00px" width="30.00" height="30.00" viewBox="0 0 30 30"><circle cx="4.6" cy="5" r="3.8" fill="#6bd1c1"/><circle cx="21" cy="25.2" r="3.8" fill="#6bd1c1"/><path d="M4.6 5 C8 9 9.5 11 9.5 15.5 C9.5 21.5 13 25.2 21 25.2" fill="none" stroke="#6bd1c1" stroke-width="2.2" stroke-linecap="round" stroke-linejoin="round" /><path d="M16.5 1.5 L28.5 6 L23.5 9 L27.5 16.5 M23.5 9 L20.2 13.5 Z M16.5 1.5 L20.2 13.5" fill="none" stroke="#6bd1c1" stroke-width="2.2" stroke-linecap="round" stroke-linejoin="round" /></svg>
<svg class="a" style="left:151.50px;top:608.50px" width="36.00" height="14.00" viewBox="0 0 36 14"><rect x="1.2" y="1.2" width="33.6" height="11.6" rx="1.5" fill="none" stroke="#929ca8" stroke-width="2.4"/><rect x="13" y="5" width="11" height="4" rx="0.5" fill="#929ca8"/><rect x="5" y="6" width="3.5" height="1.6" rx="0" fill="#929ca8"/></svg>
<div class="a t" id="ab" style="top:599.5px;height:31px;line-height:31px;font-size:24px;font-weight:400;color:#929ca8;left:205px;transform-origin:0 50%;transform:scaleX(1.0117);">AppBar</div>
<svg class="a" style="left:628.30px;top:612.15px" width="11.40" height="5.70" viewBox="0 0 12 6"><path d="M0 0 H12 L6 6 Z" fill="#929ca8" /></svg>
<div class="a" style="left:171.8px;top:665.8px;width:26.5px;height:6.6px;background:#929ca8;"></div>
<div class="a" style="left:180.6px;top:665.8px;width:9px;height:27.4px;background:#929ca8;"></div>
<div class="a" style="left:186.8px;top:674.5px;width:19.5px;height:6.4px;background:#929ca8;"></div>
<div class="a" style="left:193.6px;top:674.5px;width:7.4px;height:18.7px;background:#929ca8;"></div>
<div class="a t" id="txt" style="top:663.0px;height:31px;line-height:31px;font-size:24px;font-weight:400;color:#929ca8;left:224px;transform-origin:0 50%;transform:scaleX(1.0224);">Text</div>
<div class="a" style="left:704px;top:130px;width:72px;height:72px;background:#15191c;border-radius:18px;box-shadow:0 4px 10px rgba(0,0,0,.25);"></div>
<svg class="a" style="left:725.00px;top:149.00px" width="30.00" height="32.00" viewBox="0 0 30 32"><rect x="0" y="0" width="8.4" height="31" rx="2" fill="#98a1ae"/><path d="M26 9 L17.5 16 L26 23" fill="none" stroke="#98a1ae" stroke-width="4.2" stroke-linecap="round" stroke-linejoin="round" style="stroke-linecap:round;stroke-linejoin:miter"/></svg>
<div class="a" style="left:792px;top:130px;width:208px;height:72px;background:#15191c;border-radius:20px;box-shadow:0 4px 10px rgba(0,0,0,.25);"></div>
<svg class="a" style="left:809.00px;top:165.00px" width="22.00" height="4.00" viewBox="0 0 22 4"><rect x="0" y="0" width="22" height="3.4" rx="0.5" fill="#c4c7cc"/></svg>
<svg class="a" style="left:961.00px;top:156.00px" width="22.00" height="22.00" viewBox="0 0 22 22"><rect x="0" y="9.3" width="22" height="3.4" rx="0.5" fill="#c4c7cc"/><rect x="9.3" y="0" width="3.4" height="22" rx="0.5" fill="#c4c7cc"/></svg>
<div class="a t" id="z75" style="top:147.0px;height:40px;line-height:40px;font-size:31px;font-weight:700;color:#fff;left:865px;transform-origin:0 50%;transform:scaleX(0.9992);">75%</div>
<div class="a" style="left:1378px;top:124px;width:405px;height:84px;background:#15191c;border-radius:24px;border:2px solid #2a3038;box-sizing:border-box;"></div>
<div class="a" style="left:1383px;top:130px;width:72px;height:72px;background:#2b313b;border-radius:18px;"></div>
<svg class="a" style="left:1408.50px;top:150.00px" width="21.00" height="34.00" viewBox="0 0 21 34"><rect x="1.3" y="1.3" width="18.4" height="31.4" rx="4" fill="none" stroke="#fff" stroke-width="2.6"/><rect x="1.3" y="28" width="18.4" height="4.5" rx="1" fill="#fff"/></svg>
<svg class="a" style="left:1477.00px;top:149.50px" width="29.00" height="37.00" viewBox="0 0 29 37"><rect x="1.2" y="1.2" width="26.6" height="34.6" rx="4.5" fill="none" stroke="#98a1ae" stroke-width="2.4"/><path d="M1.2 29 H27.8 V32 a4 4 0 0 1 -4 4 H5.2 a4 4 0 0 1 -4 -4 Z" fill="#98a1ae" /></svg>
<svg class="a" style="left:1544.00px;top:150.50px" width="38.00" height="35.00" viewBox="0 0 38 35"><rect x="1" y="1" width="36" height="26.5" rx="1" fill="none" stroke="#98a1ae" stroke-width="2"/><rect x="1" y="23.5" width="36" height="4.5" rx="0" fill="#98a1ae"/><path d="M19 28 V31.5 M8 34 C13 32.2 25 32.2 30 34" fill="none" stroke="#98a1ae" stroke-width="1.8" stroke-linecap="round" stroke-linejoin="round" /></svg>
<div class="a t" id="sz" style="top:134.0px;height:29px;line-height:29px;font-size:22px;font-weight:400;color:#8f98a6;left:1615.5px;transform-origin:0 50%;transform:scaleX(0.9217);">Size (px)</div>
<div class="a t" id="dim" style="top:168.0px;height:31px;line-height:31px;font-size:23.5px;font-weight:400;color:#fff;-webkit-text-stroke:0.7px #fff;left:1615.5px;transform-origin:0 50%;transform:scaleX(0.9553);">393 × 852</div>
<svg class="a" style="left:1734.50px;top:154.00px" width="24.00" height="24.00" viewBox="0 0 24 24"><circle cx="12" cy="12" r="10.6" fill="none" stroke="#57616d" stroke-width="2"/><rect x="11" y="10.6" width="2" height="7.6" rx="0.6" fill="#57616d"/><circle cx="12" cy="7.3" r="1.3" fill="#57616d"/></svg>
<div class="a" style="left:2160px;top:130px;width:75px;height:72px;background:#15191c;border-radius:20px;box-shadow:0 4px 10px rgba(0,0,0,.25);"></div>
<svg class="a" style="left:2181.00px;top:147.00px" width="38.00" height="38.00" viewBox="0 0 38 38"><circle cx="19" cy="19" r="8.6" fill="#98a1ae"/><path d="M19 1.5 V5.5 M19 32.5 V36.5 M1.5 19 H5.5 M32.5 19 H36.5 M6.6 6.6 L9.4 9.4 M28.6 28.6 L31.4 31.4 M6.6 31.4 L9.4 28.6 M28.6 9.4 L31.4 6.6" fill="none" stroke="#98a1ae" stroke-width="3" stroke-linecap="round" stroke-linejoin="round" /></svg>
<div class="a" style="left:2252px;top:130px;width:72px;height:72px;background:#15191c;border-radius:20px;box-shadow:0 4px 10px rgba(0,0,0,.25);"></div>
<svg class="a" style="left:2272.00px;top:151.00px" width="32.00" height="32.00" viewBox="0 0 32 32"><rect x="1.2" y="1.2" width="6.6" height="6.6" rx="1.2" fill="none" stroke="#98a1ae" stroke-width="2.2"/><rect x="23" y="1.2" width="6.6" height="6.6" rx="1.2" fill="none" stroke="#98a1ae" stroke-width="2.2"/><rect x="1.2" y="23" width="6.6" height="6.6" rx="1.2" fill="none" stroke="#98a1ae" stroke-width="2.2"/><path d="M8 4.5 H23 M4.5 8 V23 M26.3 8 V12 M8 26.3 H12" fill="none" stroke="#98a1ae" stroke-width="2.2" stroke-linecap="round" stroke-linejoin="round" /><path d="M21.33 14.08 L23.67 14.08 L25.03 16.90 L26.51 17.76 L29.65 17.53 L30.81 19.55 L29.04 22.14 L29.04 23.86 L30.81 26.45 L29.65 28.47 L26.51 28.24 L25.03 29.10 L23.67 31.92 L21.33 31.92 L19.97 29.10 L18.49 28.24 L15.35 28.47 L14.19 26.45 L15.96 23.86 L15.96 22.14 L14.19 19.55 L15.35 17.53 L18.49 17.76 L19.97 16.90 Z" fill="#98a1ae" stroke="#98a1ae" stroke-width="1.5" stroke-linejoin="round"/><circle cx="22.5" cy="23" r="2.7" fill="#15191c"/></svg>
<div class="a" style="left:1837px;top:216px;width:60px;height:60px;background:#2b313b;border-radius:16px;"></div>
<svg class="a" style="left:1852.00px;top:240.50px" width="30.00" height="13.00" viewBox="0 0 30 13"><rect x="1.2" y="1.2" width="27.6" height="10.6" rx="1" fill="none" stroke="#fff" stroke-width="2.4"/><rect x="11" y="4.6" width="9" height="3.8" rx="0" fill="#fff"/><rect x="4.5" y="5.6" width="3" height="1.6" rx="0" fill="#fff"/></svg>
<div class="a" style="left:1837px;top:1434px;width:60px;height:60px;background:#2b313b;border-radius:16px;"></div>
<svg class="a" style="left:1851.50px;top:1451.50px" width="31.00" height="25.00" viewBox="0 0 31 25"><rect x="1.3" y="1.3" width="28.4" height="22.4" rx="2" fill="none" stroke="#fff" stroke-width="2.6"/><rect x="6" y="16" width="19" height="3.6" rx="0" fill="#fff"/></svg>
<div class="a" style="left:1219px;top:216px;width:590px;height:1278px;border-radius:11px;background:#f1f4f8;overflow:hidden"><div class="a" style="left:0;top:0;width:590px;height:173px;background:#68d993;box-shadow:0 2px 6px rgba(0,0,0,.22)"></div></div>
<div class="a t" id="pt" style="top:323.0px;height:46px;line-height:46px;font-size:35px;font-weight:400;color:#fff;left:1244px;transform-origin:0 50%;transform:scaleX(1.0086);">Page Title</div>
<div class="a" style="left:1243px;top:390px;width:542px;height:61px;background:#fff;border-radius:11px;"></div>
<div class="a t" id="tf2" style="top:406.5px;height:27px;line-height:27px;font-size:20.5px;font-weight:700;color:#57636c;letter-spacing:0.3px;left:1262px;transform-origin:0 50%;transform:scaleX(1.0091);">TextField</div>
<div class="a" style="left:1455px;top:421px;width:68px;height:32px;background:#4b9988;border-radius:7px 7px 0 0;"></div>
<div class="a t" id="bl" style="top:425.5px;height:22px;line-height:22px;font-size:17px;font-weight:400;color:#fff;left:1463px;transform-origin:0 50%;transform:scaleX(1.0579);">Button</div>
<div class="a" style="left:1455px;top:451px;width:118px;height:60px;background:#68d993;border:2px solid #4b9988;box-sizing:border-box;"></div>
<div class="a t" style="top:468.5px;height:27px;line-height:27px;font-size:21px;font-weight:700;color:#fff;letter-spacing:0.3px;left:1514px;transform-origin:50% 50%;margin-left:-500px;width:1000px;text-align:center;"><span id="bb" style="display:inline-block;transform:scaleX(0.9865)">Button</span></div>
<div class="a" style="left:1495px;top:504.5px;width:38px;height:12.5px;background:#cfe6e1;border-radius:7px;border:2px solid #1d2a2a;box-sizing:border-box;"></div>
<div class="a" style="left:2365px;top:123px;width:28px;height:28px;border-radius:8px;border:2.4px solid #fff;box-sizing:border-box;"></div>
<div class="a t" style="top:130.7px;height:13px;line-height:13px;font-size:10px;font-weight:700;color:#fff;left:2379px;transform-origin:50% 50%;margin-left:-500px;width:1000px;text-align:center;"><span id="btn2" style="display:inline-block;transform:scaleX(0.7538)">BTN</span></div>
<div class="a t" id="rb" style="top:119.0px;height:34px;line-height:34px;font-size:26px;font-weight:700;color:#fff;left:2406.5px;transform-origin:0 50%;transform:scaleX(0.9433);">Button</div>
<div class="a" style="left:2364px;top:168px;width:324px;height:65px;background:#0a0d11;border-radius:17px;border:2px solid #333a46;box-sizing:border-box;"></div>
<div class="a t" id="rbi" style="top:182.5px;height:36px;line-height:36px;font-size:27.5px;font-weight:400;color:#fff;left:2388.5px;transform-origin:0 50%;transform:scaleX(1.0061);">Button</div>
<div class="a" style="left:2700px;top:168px;width:64px;height:64px;background:#1f2429;border-radius:18px;border:2.6px solid #343b47;box-sizing:border-box;"></div>
<svg class="a" style="left:2716.80px;top:186.28px" width="30.40" height="29.45" viewBox="0 0 32 31"><path d="M8.2 2 H23.8 L30.2 10.8 L16 29.2 L1.8 10.8 Z M1.8 10.8 H30.2 M12.4 2.2 L11.2 10.8 L16 28.5 L20.8 10.8 L19.6 2.2" fill="none" stroke="#fff" stroke-width="2.8" stroke-linecap="round" stroke-linejoin="round" /></svg>
<div class="a" style="left:2776px;top:168px;width:64px;height:64px;background:#1f2429;border-radius:18px;border:2.6px solid #343b47;box-sizing:border-box;"></div>
<svg class="a" style="left:2792.80px;top:185.42px" width="30.40" height="31.16" viewBox="0 0 40 41"><path d="M19.8 1.6 H9 a7.5 7.5 0 0 0 -7.5 7.5 V31.7 a7.5 7.5 0 0 0 7.5 7.5 H31 a7.5 7.5 0 0 0 7.5 -7.5 V20.3" fill="none" stroke="#fff" stroke-width="3.9" stroke-linecap="round" stroke-linejoin="round" style="stroke-linecap:butt"/><path d="M31.6 2 V14.6 M25.3 8.3 H37.9" fill="none" stroke="#fff" stroke-width="3.9" stroke-linecap="round" stroke-linejoin="round" /><circle cx="12.6" cy="13.2" r="3.9" fill="none" stroke="#fff" stroke-width="3.7"/><circle cx="12.6" cy="27.1" r="3.9" fill="none" stroke="#fff" stroke-width="3.7"/></svg>
<div class="a" style="left:2852px;top:168px;width:64px;height:64px;background:#1f2429;border-radius:18px;border:2.6px solid #343b47;box-sizing:border-box;"></div>
<svg class="a" style="left:2869.60px;top:186.15px" width="28.80" height="29.70" viewBox="0 0 32 33"><g transform="scale(0.66)"><path d="M10.5 1.5 H46 L47.5 3.5 L39.2 16.5 H3.5 L2.2 14 Z M22 2 L27.7 16 M4.2 16.5 L7.5 24.5 M29 17 L32.5 24.5 M6.5 24.5 H33 M32.5 25 L33.5 27 L25.7 39.5 H1.5 L0.5 36 L7.5 25.5 M9 27 L13.5 38.5 M1.5 39.5 L6.7 47.5 L14.5 40.2" fill="none" stroke="#fff" stroke-width="4.393939393939394" stroke-linecap="round" stroke-linejoin="round" /></g></svg>
<div class="a" style="left:2364px;top:254px;width:552px;height:72px;background:#1f2429;border-radius:18px;"></div>
<div class="a" style="left:2478px;top:258px;width:103px;height:64px;background:#131619;border-radius:14px;"></div>
<svg class="a" style="left:2399.00px;top:272.00px" width="40.00" height="40.00" viewBox="0 0 40 40"><path d="M3 27.5 L27.5 3 L37 12.5 L12.5 37 Z M9 21.5 L12 24.5 M14 16.5 L18.5 21 M19 11.5 L22 14.5 M24 6.5 L28.5 11" fill="none" stroke="#8d96a3" stroke-width="2.6" stroke-linecap="round" stroke-linejoin="round" style="stroke-linejoin:miter"/><path d="M3.5 11 L11 3.5 L17 9 M9.5 17 L3.5 11" fill="none" stroke="#8d96a3" stroke-width="2.6" stroke-linecap="round" stroke-linejoin="round" style="stroke-linejoin:miter"/><path d="M24.5 31.5 L31.5 24.5 L36 28 L38.5 38 L28 35.8 Z" fill="none" stroke="#8d96a3" stroke-width="2.6" stroke-linecap="round" stroke-linejoin="round" style="stroke-linejoin:miter"/></svg>
<svg class="a" style="left:2508.50px;top:271.00px" width="42.00" height="40.00" viewBox="0 0 42 40"><circle cx="6" cy="7" r="5" fill="#fff"/><circle cx="28" cy="34" r="5" fill="#fff"/><path d="M6 7 C10.5 12 12.5 14.5 12.5 20.5 C12.5 28.5 17.5 34 28 34" fill="none" stroke="#fff" stroke-width="2.8" stroke-linecap="round" stroke-linejoin="round" /><path d="M22.5 2.5 L39 9 L32 13 L37.5 23.5 M32 13 L27.5 19 M22.5 2.5 L27.5 19 Z" fill="none" stroke="#fff" stroke-width="2.8" stroke-linecap="round" stroke-linejoin="round" style="stroke-linejoin:miter"/></svg>
<svg class="a" style="left:2621.00px;top:273.00px" width="38.00" height="38.00" viewBox="0 0 40 40"><rect x="1.5" y="1.5" width="37" height="37" rx="4" fill="none" stroke="#8d96a3" stroke-width="2.8"/><path d="M1.5 13.8 H38.5 M1.5 26.2 H38.5" fill="none" stroke="#8d96a3" stroke-width="2.6" stroke-linecap="round" stroke-linejoin="round" /><circle cx="25" cy="7.8" r="1.8" fill="#8d96a3"/><circle cx="30.5" cy="7.8" r="1.8" fill="#8d96a3"/><circle cx="25" cy="20" r="1.8" fill="#8d96a3"/><circle cx="30.5" cy="20" r="1.8" fill="#8d96a3"/><circle cx="25" cy="32.3" r="1.8" fill="#8d96a3"/><circle cx="30.5" cy="32.3" r="1.8" fill="#8d96a3"/></svg>
<svg class="a" style="left:2742.00px;top:277.50px" width="20.00" height="26.00" viewBox="0 0 20 26"><path d="M0 0 L20 13 L0 26 Z" fill="#8d96a3" /></svg>
<svg class="a" style="left:2842.50px;top:272.00px" width="36.00" height="38.00" viewBox="0 0 36 38"><path d="M17 4.5 H9 a7.5 7.5 0 0 0 -7.5 7.5 V29 a7.5 7.5 0 0 0 7.5 7.5 H24.5 a7.5 7.5 0 0 0 7.5 -7.5 V19.5" fill="none" stroke="#8d96a3" stroke-width="2.6" stroke-linecap="round" stroke-linejoin="round" /><path d="M29 1.5 V12.5 M23.5 7 H34.5" fill="none" stroke="#8d96a3" stroke-width="2.6" stroke-linecap="round" stroke-linejoin="round" /><path d="M9.5 14 H15 M9.5 21 H24 M9.5 28 H24" fill="none" stroke="#8d96a3" stroke-width="2.6" stroke-linecap="round" stroke-linejoin="round" /></svg>
<div class="a" style="left:2364px;top:356px;width:552px;height:72px;background:#2d333b;border-radius:18px;"></div>
<div class="a" style="left:2368px;top:360px;width:270px;height:64px;background:#0a0d11;border-radius:14px;"></div>
<svg class="a" style="left:2388.70px;top:376.70px" width="30.60" height="30.60" viewBox="0 0 30 30"><circle cx="4.6" cy="5" r="3.8" fill="#fff"/><circle cx="21" cy="25.2" r="3.8" fill="#fff"/><path d="M4.6 5 C8 9 9.5 11 9.5 15.5 C9.5 21.5 13 25.2 21 25.2" fill="none" stroke="#fff" stroke-width="2.2" stroke-linecap="round" stroke-linejoin="round" /><path d="M16.5 1.5 L28.5 6 L23.5 9 L27.5 16.5 M23.5 9 L20.2 13.5 Z M16.5 1.5 L20.2 13.5" fill="none" stroke="#fff" stroke-width="2.2" stroke-linecap="round" stroke-linejoin="round" /></svg>
<div class="a t" id="acts" style="top:374.5px;height:34px;line-height:34px;font-size:26px;font-weight:700;color:#fff;left:2483.5px;transform-origin:0 50%;transform:scaleX(0.9544);">Actions</div>
<svg class="a" style="left:2656.96px;top:378.23px" width="30.08" height="29.14" viewBox="0 0 32 31"><path d="M8.2 2 H23.8 L30.2 10.8 L16 29.2 L1.8 10.8 Z M1.8 10.8 H30.2 M12.4 2.2 L11.2 10.8 L16 28.5 L20.8 10.8 L19.6 2.2" fill="none" stroke="#8d96a3" stroke-width="2.8" stroke-linecap="round" stroke-linejoin="round" /></svg>
<div class="a t" id="ablk" style="top:375.0px;height:33px;line-height:33px;font-size:25.5px;font-weight:400;color:#8d96a3;left:2725px;transform-origin:0 50%;transform:scaleX(0.9931);">Action Blocks</div>
<div class="a" style="left:2364px;top:460px;width:552px;height:100px;background:#1f2429;border-radius:22px;border:2px solid #333a46;box-sizing:border-box;"></div>
<svg class="a" style="left:2383.00px;top:498.00px" width="26.00" height="24.00" viewBox="0 0 26 24"><rect x="0" y="1" width="9.5" height="9" rx="2.5" fill="#fff"/><rect x="16.5" y="1" width="9.5" height="9" rx="2.5" fill="#fff"/><rect x="16.5" y="14" width="9.5" height="9.5" rx="2.5" fill="#fff"/><path d="M9 5.5 H17 M13 5.5 V17 a1.5 1.5 0 0 0 1.5 1.5 H17" fill="none" stroke="#fff" stroke-width="2" stroke-linecap="round" stroke-linejoin="round" /></svg>
<div class="a t" id="afe" style="top:493.5px;height:32px;line-height:32px;font-size:24.5px;font-weight:400;color:#fff;-webkit-text-stroke:0.9px #fff;left:2425.5px;transform-origin:0 50%;transform:scaleX(0.9826);">Action Flow Editor</div>
<svg class="a" style="left:2629.50px;top:498.00px" width="24.00" height="24.00" viewBox="0 0 24 24"><circle cx="12" cy="12" r="10.6" fill="none" stroke="#57616d" stroke-width="2"/><rect x="11" y="10.6" width="2" height="7.6" rx="0.6" fill="#57616d"/><circle cx="12" cy="7.3" r="1.3" fill="#57616d"/></svg>
<div class="a" style="left:2770px;top:478px;width:128px;height:64px;background:#69cfc0;border-radius:18px;"></div>
<div class="a t" style="top:492.0px;height:35px;line-height:35px;font-size:27px;font-weight:700;color:#fff;left:2834px;transform-origin:50% 50%;margin-left:-500px;width:1000px;text-align:center;"><span id="edit" style="display:inline-block;transform:scaleX(0.9804)">Edit</span></div>
<div class="a t" id="da" style="top:595.0px;height:42px;line-height:42px;font-size:32px;font-weight:700;color:#e08c62;left:2364px;transform-origin:0 50%;transform:scaleX(0.9681);">Define Action</div>
<div class="a" style="left:2852px;top:584px;width:64px;height:64px;background:#1f2429;border-radius:17px;border:2px solid #333a46;box-sizing:border-box;"></div>
<svg class="a" style="left:2869.60px;top:600.80px" width="28.80" height="30.40" viewBox="0 0 36 38"><path d="M17 4.5 H9 a7.5 7.5 0 0 0 -7.5 7.5 V29 a7.5 7.5 0 0 0 7.5 7.5 H24.5 a7.5 7.5 0 0 0 7.5 -7.5 V19.5" fill="none" stroke="#fff" stroke-width="2.6" stroke-linecap="round" stroke-linejoin="round" /><path d="M29 1.5 V12.5 M23.5 7 H34.5" fill="none" stroke="#fff" stroke-width="2.6" stroke-linecap="round" stroke-linejoin="round" /><path d="M9.5 14 H15 M9.5 21 H24 M9.5 28 H24" fill="none" stroke="#fff" stroke-width="2.6" stroke-linecap="round" stroke-linejoin="round" /></svg>
<div class="a" style="left:2364px;top:664px;width:552px;height:64px;background:#1f2429;border-radius:18px;border:2px solid #333a46;box-sizing:border-box;"></div>
<div class="a t" id="ontap" style="top:681.5px;height:30px;line-height:30px;font-size:23px;font-weight:700;color:#fff;left:2390.5px;transform-origin:0 50%;transform:scaleX(0.9804);">On Tap</div>
<svg class="a" style="left:2477.00px;top:684.00px" width="24.00" height="24.00" viewBox="0 0 24 24"><circle cx="12" cy="12" r="10.6" fill="none" stroke="#57616d" stroke-width="2"/><rect x="11" y="10.6" width="2" height="7.6" rx="0.6" fill="#57616d"/><circle cx="12" cy="7.3" r="1.3" fill="#57616d"/></svg>
<svg class="a" style="left:2857.00px;top:689.00px" width="30.00" height="17.00" viewBox="0 0 30 17"><path d="M1.5 1.8 L15 15 L28.5 1.8" fill="none" stroke="#98a1ae" stroke-width="2.6" stroke-linecap="round" stroke-linejoin="round" style="stroke-linecap:butt;stroke-linejoin:miter"/></svg>
<div class="a t" id="a1" style="top:759.0px;height:36px;line-height:36px;font-size:28px;font-weight:400;color:#929ca8;left:2364px;transform-origin:0 50%;transform:scaleX(0.9489);">Action 1</div>
<svg class="a" style="left:2827.50px;top:763.00px" width="30.00" height="28.00" viewBox="0 0 30 28"><path d="M2 24.5 L3 18 L18.5 2.5 a2.5 2.5 0 0 1 3.5 0 L25 5.5 a2.5 2.5 0 0 1 0 3.5 L9.5 24.5 Z M15.5 5.5 L22 12" fill="none" stroke="#98a1ae" stroke-width="2.2" stroke-linecap="round" stroke-linejoin="round" /><path d="M16 26.5 H28.5" fill="none" stroke="#98a1ae" stroke-width="2.2" stroke-linecap="round" stroke-linejoin="round" /></svg>
<svg class="a" style="left:2890.00px;top:764.00px" width="8.00" height="28.00" viewBox="0 0 8 28"><circle cx="4" cy="4" r="3.3" fill="#98a1ae"/><circle cx="4" cy="14" r="3.3" fill="#98a1ae"/><circle cx="4" cy="24" r="3.3" fill="#98a1ae"/></svg>
<div class="a" style="left:2364px;top:808px;width:552px;height:378px;border-radius:18px;background:#1d2228;overflow:hidden"><div class="a" style="left:0;top:0;width:552px;height:79px;background:#27264a"></div><div class="a" style="left:0;top:78px;width:552px;height:7px;background:#4b39ef"></div><div class="a" style="left:0;top:85px;width:552px;height:163px;background:#282d36"></div></div>
<svg class="a" style="left:2387.50px;top:834.50px" width="32.00" height="32.00" viewBox="0 0 32 32"><circle cx="13.5" cy="13.5" r="11.3" fill="none" stroke="#fff" stroke-width="3"/><path d="M22 22 L30 30" fill="none" stroke="#fff" stroke-width="3.2" stroke-linecap="round" stroke-linejoin="round" /></svg>
<div class="a t" id="ins" style="top:831.5px;height:36px;line-height:36px;font-size:28px;font-weight:400;color:#fff;left:2444px;transform-origin:0 50%;transform:scaleX(0.9932);">insert</div>
<div class="a" style="left:2512.5px;top:831.5px;width:3px;height:36.5px;background:#4b39ef;border-radius:1.5px;"></div>
<div class="a t" id="tr" style="top:904.0px;height:29px;line-height:29px;font-size:22.5px;font-weight:700;color:#8d96a3;left:2384.5px;transform-origin:0 50%;transform:scaleX(0.9835);">Top Results</div>
<div class="a" style="left:2367px;top:942px;width:551px;height:71px;background:#27264a;border:5px solid #e8442a;box-sizing:border-box;"></div>
<div class="a t" id="sup" style="top:960.0px;height:30px;line-height:30px;font-size:23px;font-weight:400;color:#8d96a3;left:2404px;transform-origin:0 50%;transform:scaleX(0.9561);">Supabase &gt;</div>
<div class="a t" id="ir" style="top:960.0px;height:30px;line-height:30px;font-size:23px;font-weight:700;color:#fff;left:2529px;transform-origin:0 50%;transform:scaleX(0.9908);">Insert Row</div>
<svg class="a" style="left:2860.00px;top:964.00px" width="32.00" height="20.00" viewBox="0 0 32 20"><path d="M30 1.5 V10.5 H3 M11 2.5 L2.5 10.5 L11 18.5" fill="none" stroke="#4b39ef" stroke-width="2.6" stroke-linecap="round" stroke-linejoin="round" style="stroke-linecap:butt;stroke-linejoin:miter"/></svg>
<div class="a t" id="bd" style="top:1018.0px;height:30px;line-height:30px;font-size:23px;font-weight:700;color:#8d96a3;left:2384.5px;transform-origin:0 50%;transform:scaleX(1.0242);">Backend/Database</div>
<svg class="a" style="left:2864.75px;top:1024.58px" width="31.50" height="17.85" viewBox="0 0 30 17"><path d="M1.5 1.8 L15 15 L28.5 1.8" fill="none" stroke="#98a1ae" stroke-width="2.6" stroke-linecap="round" stroke-linejoin="round" style="stroke-linecap:butt;stroke-linejoin:miter"/></svg>
<div class="a t" id="sb" style="top:1074.5px;height:30px;line-height:30px;font-size:23px;font-weight:700;color:#fff;left:2384.5px;transform-origin:0 50%;transform:scaleX(0.9710);">Supabase</div>
<svg class="a" style="left:2864.75px;top:1081.08px" width="31.50" height="17.85" viewBox="0 0 30 17"><path d="M1.5 1.8 L15 15 L28.5 1.8" fill="none" stroke="#98a1ae" stroke-width="2.6" stroke-linecap="round" stroke-linejoin="round" style="stroke-linecap:butt;stroke-linejoin:miter"/></svg>
<div class="a t" id="ir2" style="top:1137.5px;height:30px;line-height:30px;font-size:23px;font-weight:700;color:#8d96a3;left:2404px;transform-origin:0 50%;transform:scaleX(0.9951);">Insert Row</div>
<div class="a" style="left:2804px;top:1459px;width:96px;height:96px;background:#4a3ae6;border-radius:48px;box-shadow:0 4px 18px rgba(0,0,0,.3);"></div>
<svg class="a" style="left:2830.38px;top:1484.46px" width="42.24" height="46.08" viewBox="0 0 44 48"><path d="M6 0 H38 a6 6 0 0 1 6 6 V48 L32.5 42 H6 a6 6 0 0 1 -6 -6 V6 a6 6 0 0 1 6 -6 Z" fill="#fff" /><path d="M7.5 29.5 C16 36.5 28 36.5 36.5 29.5" fill="none" stroke="#4a3ae6" stroke-width="2.8" stroke-linecap="round"/></svg>
</body></html>
